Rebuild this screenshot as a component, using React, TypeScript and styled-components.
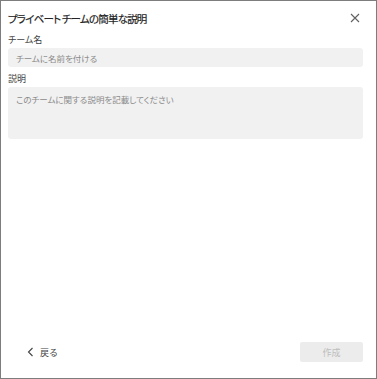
import React from 'react'
import styled, { createGlobalStyle } from 'styled-components'

const GlobalStyle = createGlobalStyle`
  html, body {
    margin: 0;
    padding: 0;
    background: #ffffff;
  }
  body {
    font-family: "Noto Sans CJK JP", "Noto Sans", sans-serif;
    font-feature-settings: "palt";
  }
`

const Dialog = styled.div`
  box-sizing: border-box;
  width: 377px;
  height: 379px;
  border: 1px solid #7d7d7d;
  background: #ffffff;
  display: flex;
  flex-direction: column;
  padding: 0 13px 0 7px;
`

const Header = styled.div`
  display: flex;
  align-items: center;
  justify-content: space-between;
  height: 34px;
  margin-bottom: -1px;
`

const Title = styled.div`
  font-size: 10.5px;
  color: #242424;
  font-weight: 400;
  letter-spacing: -0.8px;
  -webkit-text-stroke: 0.2px #242424;
`

const CloseButton = styled.button`
  border: none;
  background: none;
  padding: 0;
  width: 14px;
  height: 14px;
  display: flex;
  align-items: center;
  justify-content: center;
  margin-right: 1px;
`

const Field = styled.div`
  display: flex;
  flex-direction: column;
  gap: 2px;
  margin-bottom: 6px;
`

const Label = styled.label`
  font-size: 9px;
  color: #424242;
  line-height: 12px;
`

const TextInput = styled.div<{ tall?: boolean }>`
  box-sizing: border-box;
  width: 355px;
  height: ${({ tall }) => (tall ? '52px' : '19px')};
  background: #f1f1f1;
  border-radius: 3px;
  padding: ${({ tall }) => (tall ? '6px 8px' : '0 8px')};
  display: flex;
  align-items: ${({ tall }) => (tall ? 'flex-start' : 'center')};
  font-size: 8.5px;
  color: #8a8a8a;
  line-height: 12px;
`

const Spacer = styled.div`
  flex: 1;
`

const Footer = styled.div`
  display: flex;
  align-items: center;
  justify-content: space-between;
  height: 20px;
  margin-bottom: 16px;
  padding-left: 19px;
`

const BackLink = styled.button`
  border: none;
  background: none;
  padding: 0;
  display: flex;
  align-items: center;
  gap: 6px;
  font-family: inherit;
  font-size: 9px;
  color: #424242;
`

const CreateButton = styled.button`
  box-sizing: border-box;
  width: 63px;
  height: 20px;
  border: none;
  border-radius: 2px;
  background: #ececec;
  color: #bdbdbd;
  font-family: inherit;
  font-size: 9px;
  padding: 0;
`

export default function App() {
  return (
    <>
      <GlobalStyle />
      <Dialog>
        <Header>
          <Title>プライベート チームの簡単な説明</Title>
          <CloseButton aria-label="閉じる">
            <svg width="10" height="10" viewBox="0 0 10 10">
              <path d="M1 1 L9 9 M9 1 L1 9" stroke="#616161" strokeWidth="1.1" fill="none" />
            </svg>
          </CloseButton>
        </Header>
        <Field>
          <Label>チーム名</Label>
          <TextInput>チームに名前を付ける</TextInput>
        </Field>
        <Field>
          <Label>説明</Label>
          <TextInput tall>このチームに関する説明を記載してください</TextInput>
        </Field>
        <Spacer />
        <Footer>
          <BackLink>
            <svg width="7" height="10" viewBox="0 0 7 10">
              <path d="M5.5 1 L1.5 5 L5.5 9" stroke="#424242" strokeWidth="1.1" fill="none" />
            </svg>
            戻る
          </BackLink>
          <CreateButton disabled>作成</CreateButton>
        </Footer>
      </Dialog>
    </>
  )
}
